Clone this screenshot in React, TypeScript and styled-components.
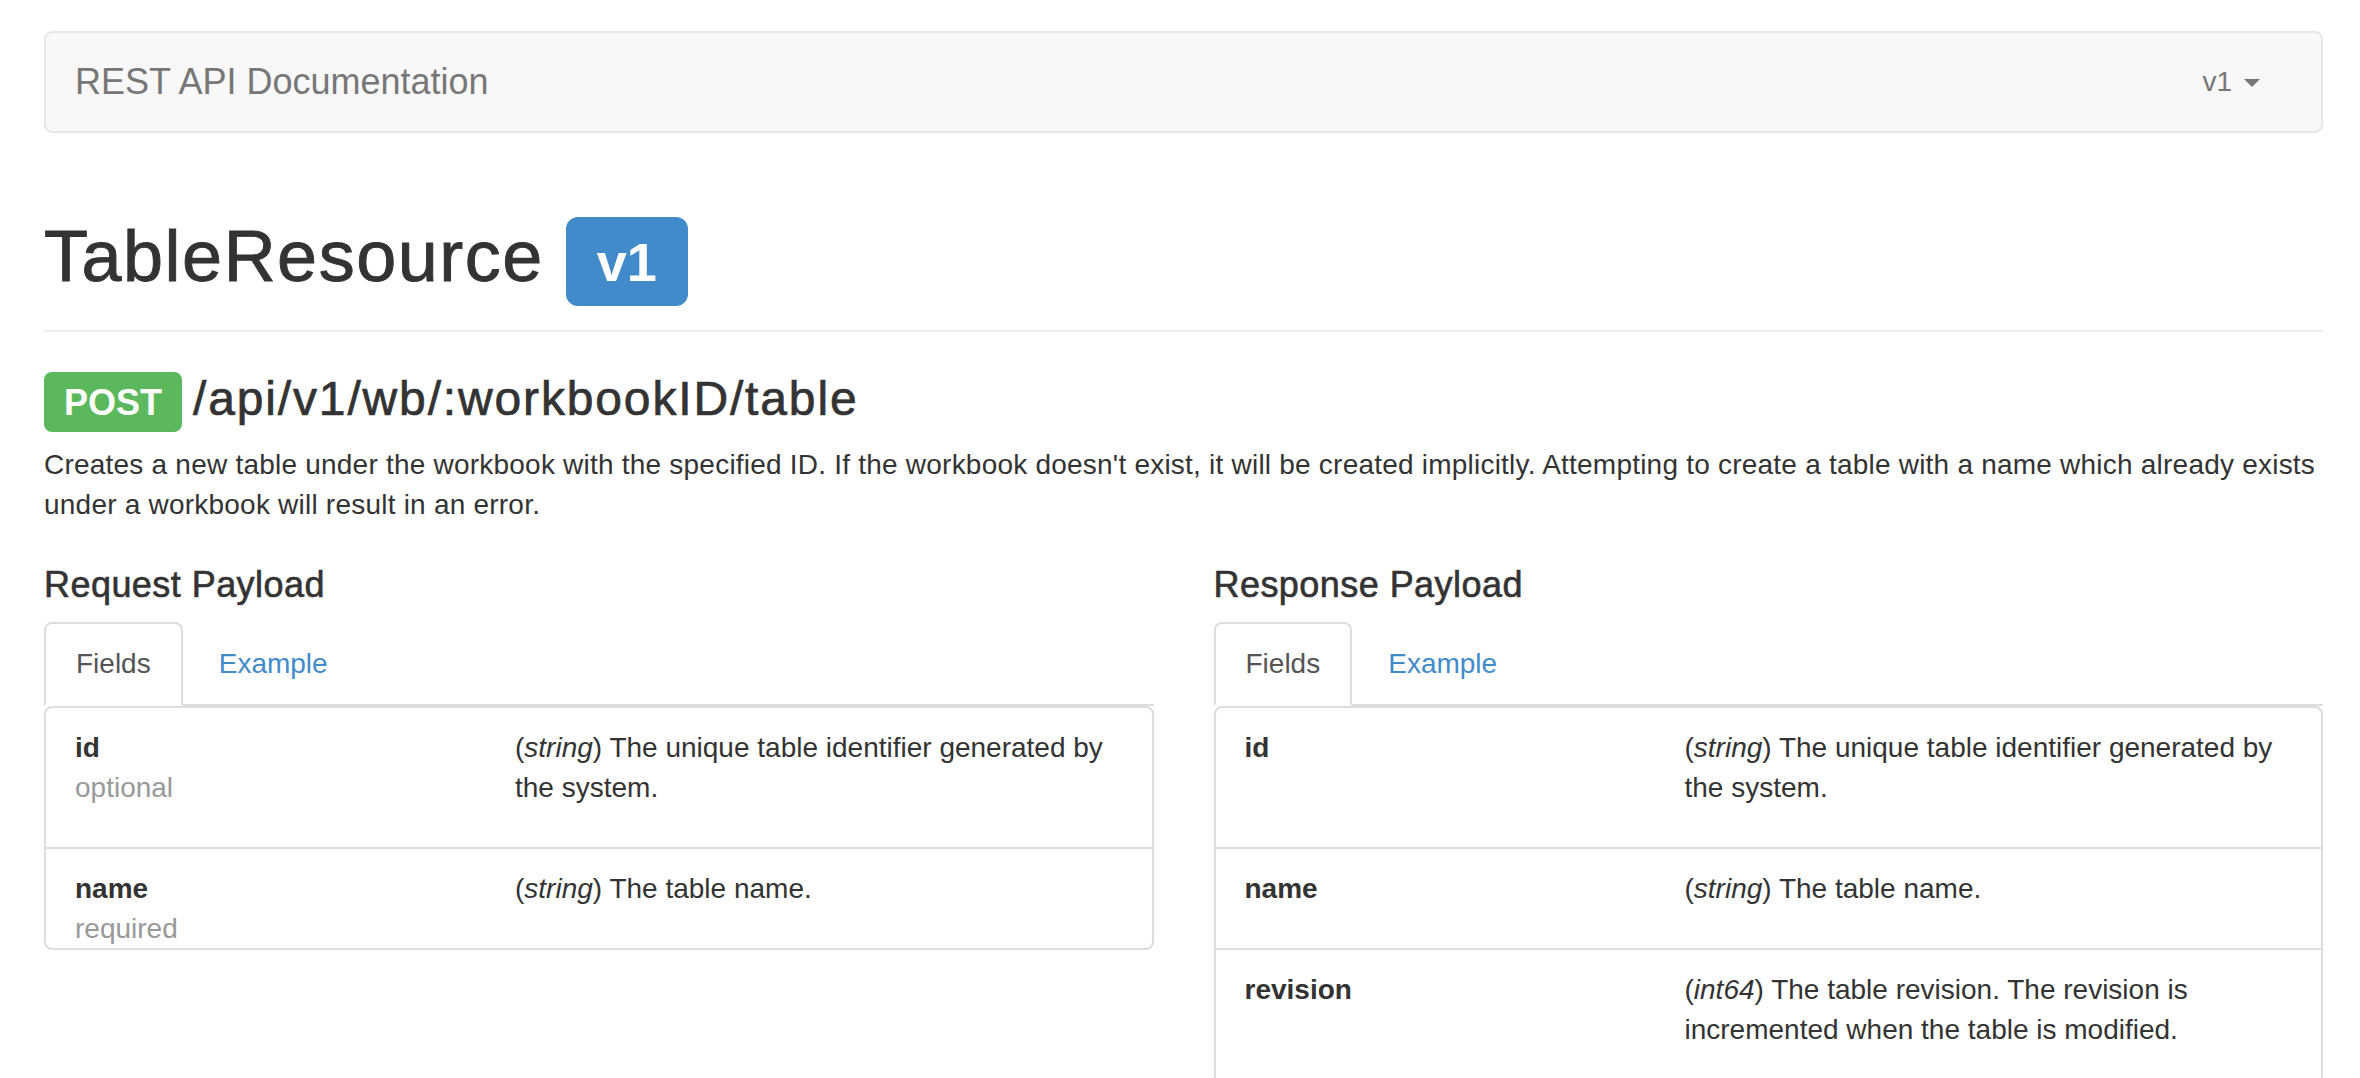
import React from 'react';
import styled, { createGlobalStyle } from 'styled-components';

interface Field {
  name: string,
  type: string,
  description: string,
  requirement?: string,
}

interface Payload {
  title: string,
  fields: Field[],
}

const GlobalStyle = createGlobalStyle`
  html, body {
    margin: 0;
    background: #fff;
  }

  body {
    font-family: "Liberation Sans", Arial, Helvetica, sans-serif;
    font-size: 28px;
    line-height: 40px;
    color: #333;
  }
`;

const Page = styled.div`
  padding: 31px 37px 40px 44px;
`;

const Navbar = styled.nav`
  display: flex;
  align-items: center;
  justify-content: space-between;
  box-sizing: border-box;
  height: 102px;
  padding: 0 61px 0 29px;
  background: #f8f8f8;
  border: 2px solid #e7e7e7;
  border-radius: 8px;
`;

const Brand = styled.a`
  font-size: 36px;
  line-height: 40px;
  color: #777;
  text-decoration: none;
`;

const VersionToggle = styled.a`
  display: flex;
  align-items: center;
  font-size: 28px;
  line-height: 40px;
  color: #777;
  text-decoration: none;
`;

const Caret = styled.span`
  display: inline-block;
  width: 0;
  height: 0;
  margin-left: 12px;
  margin-top: 2px;
  border-top: 8px solid #777;
  border-left: 8px solid transparent;
  border-right: 8px solid transparent;
`;

// headings use Helvetica Neue medium in the original, a light stroke fakes that weight
const PageHeader = styled.h1`
  display: flex;
  align-items: baseline;
  gap: 22px;
  margin: 84px 0 40px;
  padding-bottom: 24px;
  border-bottom: 2px solid #eee;
  font-size: 72px;
  line-height: 79px;
  font-weight: 500;
  letter-spacing: 1.5px;
  -webkit-text-stroke: 0.9px #333;
`;

const Label = styled.span<{ $color: string, $size: number }>`
  display: inline-block;
  background: ${p => p.$color};
  color: #fff;
  font-size: ${p => p.$size}px;
  font-weight: 700;
  line-height: 1;
  letter-spacing: 0;
  -webkit-text-stroke: 0;
  border-radius: ${p => Math.round(p.$size / 4.5)}px;
`;

const VersionLabel = styled(Label)`
  padding: 18px 31px 17px;
`;

const MethodLabel = styled(Label)`
  padding: 13px 20px 11px;
`;

const Endpoint = styled.h3`
  display: flex;
  align-items: baseline;
  gap: 11px;
  margin: 40px 0 13px;
  font-size: 48px;
  line-height: 53px;
  font-weight: 500;
  -webkit-text-stroke: 0.7px #333;
`;

const Path = styled.span`
  letter-spacing: 1.85px;
`;

const Summary = styled.p`
  margin: 0 0 40px;
  letter-spacing: 0.22px;
`;

const Columns = styled.div`
  display: grid;
  grid-template-columns: 1fr 1fr;
  column-gap: 60px;
  align-items: start;
`;

const SectionTitle = styled.h4`
  margin: 0 0 17px;
  font-size: 36px;
  line-height: 40px;
  font-weight: 500;
  letter-spacing: 0.45px;
  -webkit-text-stroke: 0.6px #333;
`;

const Tabs = styled.ul`
  display: flex;
  margin: 0;
  padding: 0;
  list-style: none;
  border-bottom: 2px solid #ddd;
`;

const Tab = styled.li<{ $active?: boolean }>`
  margin: 0 4px -2px 0;
  padding: 20px 30px;
  line-height: 40px;
  border: 2px solid ${p => (p.$active ? '#ddd' : 'transparent')};
  border-bottom-color: ${p => (p.$active ? '#fff' : 'transparent')};
  border-radius: 8px 8px 0 0;
  background: ${p => (p.$active ? '#fff' : 'transparent')};
  color: ${p => (p.$active ? '#555' : '#428bca')};
`;

const Panel = styled.div`
  border: 2px solid #ddd;
  border-radius: 8px;
`;

const FieldRow = styled.div`
  padding: 20px 29px 39px;

  & + & {
    border-top: 2px solid #ddd;
  }
`;

const FieldName = styled.div`
  float: left;
  width: 440px;
`;

const Name = styled.strong`
  display: block;
  font-weight: 700;
`;

const Requirement = styled.span`
  display: block;
  color: #999;
`;

const FieldDescription = styled.div`
  margin-left: 440px;
`;

const requestPayload: Payload = {
  title: 'Request Payload',
  fields: [
    { name: 'id', requirement: 'optional', type: 'string', description: 'The unique table identifier generated by the system.' },
    { name: 'name', requirement: 'required', type: 'string', description: 'The table name.' },
  ],
};

const responsePayload: Payload = {
  title: 'Response Payload',
  fields: [
    { name: 'id', type: 'string', description: 'The unique table identifier generated by the system.' },
    { name: 'name', type: 'string', description: 'The table name.' },
    { name: 'revision', type: 'int64', description: 'The table revision. The revision is incremented when the table is modified.' },
  ],
};

function PayloadSection({ payload }: { payload: Payload }) {
  return (
    <section>
      <SectionTitle>{payload.title}</SectionTitle>
      <Tabs>
        <Tab $active>Fields</Tab>
        <Tab>Example</Tab>
      </Tabs>
      <Panel>
        {payload.fields.map(field => (
          <FieldRow key={field.name}>
            <FieldName>
              <Name>{field.name}</Name>
              {field.requirement && <Requirement>{field.requirement}</Requirement>}
            </FieldName>
            <FieldDescription>
              (<em>{field.type}</em>) {field.description}
            </FieldDescription>
          </FieldRow>
        ))}
      </Panel>
    </section>
  );
}

export default function App() {
  return (
    <Page>
      <GlobalStyle />
      <Navbar>
        <Brand href="#">REST API Documentation</Brand>
        <VersionToggle href="#">v1<Caret /></VersionToggle>
      </Navbar>

      <PageHeader>
        TableResource
        <VersionLabel $color="#428bca" $size={54}>v1</VersionLabel>
      </PageHeader>

      <Endpoint>
        <MethodLabel $color="#5cb85c" $size={36}>POST</MethodLabel>
        <Path>/api/v1/wb/:workbookID/table</Path>
      </Endpoint>
      <Summary>
        Creates a new table under the workbook with the specified ID. If the workbook doesn't exist, it will be
        created implicitly. Attempting to create a table with a name which already exists under a workbook will
        result in an error.
      </Summary>

      <Columns>
        <PayloadSection payload={requestPayload} />
        <PayloadSection payload={responsePayload} />
      </Columns>
    </Page>
  );
}
